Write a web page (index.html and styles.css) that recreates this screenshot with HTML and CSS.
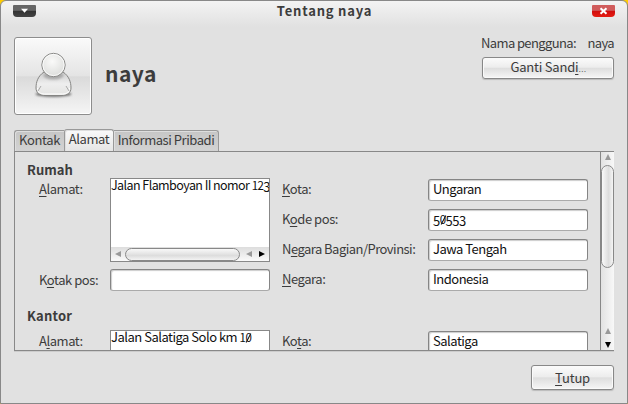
FILE: index.html
```
<!DOCTYPE html>
<html lang="id">
<head>
<meta charset="utf-8">
<title>Tentang naya</title>
<link rel="stylesheet" href="styles.css">
</head>
<body>
<div class="window">
  <header class="titlebar">
    <button class="winbtn menu"><svg width="23" height="12"><path d="M8 3.7h7l-3.5 4z" fill="#fff"/></svg></button>
    <h1 class="title">Tentang naya</h1>
    <button class="winbtn close"><svg width="23" height="12"><path d="M8.5 3.2l6 5.6M14.5 3.2l-6 5.6" stroke="#fff" stroke-width="2"/></svg></button>
  </header>
  <section class="profile">
    <button class="avatar">
      <svg width="76" height="76" viewBox="0 0 76 76">
        <defs>
          <radialGradient id="head" cx=".45" cy=".35" r=".65"><stop offset="0" stop-color="#fafaf9"/><stop offset="1" stop-color="#dcdddb"/></radialGradient>
          <linearGradient id="body" x1="0" y1="0" x2="0" y2="1"><stop offset="0" stop-color="#ccc"/><stop offset=".5" stop-color="#eee"/><stop offset="1" stop-color="#e4e4e2"/></linearGradient>
          <filter id="soft" x="-20%" y="-100%" width="140%" height="300%"><feGaussianBlur stdDeviation="1.3"/></filter>
        </defs>
        <ellipse cx="38.5" cy="56" rx="18" ry="3" fill="#777" filter="url(#soft)"/>
        <path d="M29 34C23 38 21 44 21 50c0 5 4 7.500 9 7.500h17c5 0 9-2.500 9-7.500 0-6-2-12-8-16z" fill="url(#body)" stroke="#858583"/>
        <path d="M22.500 50c0 4 3 6 7 6h18c4 0 7-2 7-6" fill="none" stroke="#fff"/>
        <path d="M26 48l-3 5M51 48l3 5" stroke="#aaa" fill="none"/>
        <ellipse cx="38.500" cy="37.500" rx="10" ry="4" fill="#aaa" filter="url(#soft)"/>
        <circle cx="38.500" cy="27" r="11.700" fill="url(#head)" stroke="#8b8b89"/>
        <circle cx="38.500" cy="27" r="10.600" fill="none" stroke="#fff" opacity=".8"/>
      </svg>
    </button>
    <div class="name">naya</div>
    <div class="account">
      <div class="user"><span>Nama pengguna:</span><span>naya</span></div>
      <button class="btn password">Ganti Sand<u>i</u><span class="dots">…</span></button>
    </div>
  </section>
  <nav class="tabs">
    <div class="tab t1">Kontak</div>
    <div class="tab active">Alamat</div>
    <div class="tab t3">Informasi Pribadi</div>
  </nav>
  <main class="panel">
    <div class="viewport">
      <section class="group">
        <h2>Rumah</h2>
        <div class="fields">
          <div class="row"><label class="short"><u>A</u>lamat:</label>
            <div class="textarea"><div class="text long">Jalan Flamboyan II nomor <span class="old">12<i class="low">3</i></span></div>
              <div class="hscroll"><i class="arrow left"></i><div class="thumb"></div><i class="arrow left second"></i><i class="arrow right"></i></div>
            </div></div>
          <div class="row"><label class="short">K<u>o</u>tak pos:</label><div class="entry"></div></div>
          <div class="column">
            <div class="row"><label><u>K</u>ota:</label><div class="entry">Ungaran</div></div>
            <div class="row"><label>K<u>o</u>de pos:</label><div class="entry"><span class="old"><i class="low">5</i><i class="zero">0</i><i class="low">553</i></span></div></div>
            <div class="row"><label class="state">N<u>e</u>gara Bagian/Provinsi:</label><div class="entry">Jawa Tengah</div></div>
            <div class="row"><label><u>N</u>egara:</label><div class="entry">Indonesia</div></div>
          </div>
        </div>
      </section>
      <section class="group office">
        <h2>Kantor</h2>
        <div class="fields">
          <div class="row"><label class="short">A<u>l</u>amat:</label><div class="textarea"><div class="text">Jalan Salatiga Solo km <span class="old">1<i class="zero">0</i></span></div></div></div>
          <div class="column"><div class="row"><label>Ko<u>t</u>a:</label><div class="entry">Salatiga</div></div></div>
        </div>
      </section>
    </div>
    <div class="vscroll"><i class="arrow up"></i><div class="vthumb"></div><i class="arrow up lower"></i><i class="arrow down"></i></div>
  </main>
  <footer class="footer"><button class="btn done"><u>T</u>utup</button></footer>
</div>
</body>
</html>
```
FILE: styles.css
```
* { box-sizing: border-box; }
body { margin: 0; background: #fc0; overflow: hidden; }
body, button { font-family: "Noto Sans CJK JP", sans-serif; font-size: 13px; letter-spacing: -.45px; line-height: 20px; color: #3c3c3c; }
button { padding: 0; margin: 0; display: block; }
i { font-style: normal; }
h1, h2 { margin: 0; }
u { text-decoration: underline; text-decoration-thickness: 1px; text-underline-offset: 2px; text-decoration-skip-ink: none; }
.window { width: 628px; height: 404px; border: 1px solid #888; border-radius: 6px 6px 0 0; background: linear-gradient(#f3f3f3, #e1e1e1 26px); display: flex; flex-direction: column; overflow: hidden; }
.titlebar { height: 36px; flex: none; display: flex; justify-content: space-between; align-items: flex-start; padding: 4px 12px; }
.title { font-size: 13px; font-weight: 700; line-height: 20px; letter-spacing: .8px; margin: -4px 0 0 21px; }
.winbtn { width: 23px; height: 12px; border: 0; border-radius: 1px 1px 4px 4px; overflow: hidden; }
.winbtn svg { display: block; }
.menu { background: linear-gradient(#666 45%, #333 50%, #444); }
.close { background: linear-gradient(#d05c5c 45%, #d00d0d 50%, #e51d12); }
.profile { display: flex; height: 92px; flex: none; padding: 0 13px; align-items: flex-start; }
.avatar { width: 78px; height: 78px; border: 1px solid #8d8d8d; border-radius: 3px; background: linear-gradient(#fafafa, #e4e4e4 50%, #dadada 51%, #f5f5f5); box-shadow: inset 0 0 0 1px #fff; }
.avatar svg { display: block; }
.name { font-size: 21px; font-weight: 700; line-height: 32px; letter-spacing: .5px; margin: 20px 0 0 13px; }
.account { margin-left: auto; width: 133px; }
.user { display: flex; justify-content: space-between; line-height: 11px; height: 20px; white-space: nowrap; letter-spacing: -.62px; }
.btn { border: 1px solid #888; border-radius: 3px; background: linear-gradient(#fbfbfb, #ededed 46%, #dedede 52%, #f6f6f6); box-shadow: inset 0 0 0 1px #fafafa, 0 1px 1px #bbb; text-align: center; }
.password { width: 132px; height: 22px; line-height: 18px; letter-spacing: -.2px; margin-left: 1px; }
.dots { font-size: 7px; }
.tabs { display: flex; height: 22px; flex: none; padding-left: 13px; align-items: flex-end; }
.tab { height: 21px; line-height: 18px; border: 1px solid #999; border-bottom: 0; background: linear-gradient(#c6c6c6, #d3d3d3); text-align: center; white-space: nowrap; box-shadow: inset 1px 1px #dedede; }
.t1 { width: 50px; border-radius: 3px 0 0; border-right: 0; letter-spacing: -.35px; }
.active { width: 50px; height: 22px; background: linear-gradient(#fafafa, #e5e5e5); border-radius: 3px 3px 0 0; }
.t3 { width: 105px; border-left: 0; border-radius: 0 3px 0 0; }
.panel { height: 200px; flex: none; margin: 0 13px; border: 1px solid #888; border-right: 0; display: flex; box-shadow: 0 1px #ccc; }
.viewport { flex: 1; overflow: hidden; }
.group { padding-left: 12px; height: 146px; }
h2 { font-size: 13px; line-height: 20px; letter-spacing: .05px; padding-top: 8px; height: 27px; }
.office h2 { height: 33px; letter-spacing: .2px; }
.fields { display: grid; grid-template-columns: 243px 306px; grid-template-rows: 90px 22px; padding-left: 12px; }
.column { grid-column: 2; grid-row: 1 / span 2; }
.column .row { height: 30px; }
.row { display: flex; align-items: flex-start; }
.fields > .row { margin-top: -1px; }
.fields > .row + .row { margin-top: 0; }
label { width: 146px; line-height: 20px; white-space: nowrap; }
.short { width: 71px; margin-top: 1px; }
.state { letter-spacing: -.53px; }
.entry { width: 160px; height: 22px; border: 1px solid #858585; border-bottom-color: #aaa; border-radius: 3px; background: #fff; box-shadow: inset 1px 1px 1px #ccc; color: #111; line-height: 18px; padding-left: 4px; letter-spacing: -.5px; white-space: nowrap; }
.textarea { width: 160px; height: 84px; border: 1px solid #888; background: #fff; color: #111; display: flex; flex-direction: column; justify-content: space-between; overflow: hidden; }
.text { line-height: 12px; height: 14px; letter-spacing: -.5px; white-space: nowrap; }
.long { font-size: 12.5px; letter-spacing: -.57px; }
.old { font-size: 11.5px; }
.low { position: relative; top: 2px; font-size: 13px; }
.zero { position: relative; font-size: 11.5px; }
.zero::after { content: ""; position: absolute; left: 3px; top: 4px; height: 10px; border-left: 1px solid #111; transform: rotate(28deg); }
.hscroll { height: 14px; background: linear-gradient(#ddd, #fafafa); display: flex; align-items: center; padding: 0 4px; }
.arrow { width: 0; height: 0; flex: none; }
.left, .right { border: 3px solid transparent; }
.left { border-left: 0; border-right: 6px solid #999; }
.right { border-right: 0; border-left: 6px solid #000; margin-left: 7px; }
.thumb { width: 116px; height: 13px; margin: 0 6px 0 4px; border: 1px solid #888; border-radius: 7px; background: linear-gradient(#f9f9f9, #ddd 60%, #f3f3f3); }
.vscroll { width: 14px; border-left: 1px solid #888; background: linear-gradient(90deg, #e2e2e2, #f8f8f8); display: flex; flex-direction: column; align-items: center; }
.up, .down { border: 3px solid transparent; }
.up { border-top: 0; border-bottom: 6px solid #999; margin-top: 2px; }
.down { border-bottom: 0; border-top: 6px solid #000; margin-top: 8px; }
.vthumb { width: 13px; height: 103px; margin-top: 5px; border: 1px solid #888; border-radius: 7px; background: linear-gradient(90deg, #f9f9f9, #ddd 60%, #f5f5f5); flex: none; }
.lower { margin-top: 60px; }
.footer { padding: 14px 13px; display: flex; justify-content: flex-end; }
.done { width: 83px; height: 25px; line-height: 20px; letter-spacing: -.2px; }
```
